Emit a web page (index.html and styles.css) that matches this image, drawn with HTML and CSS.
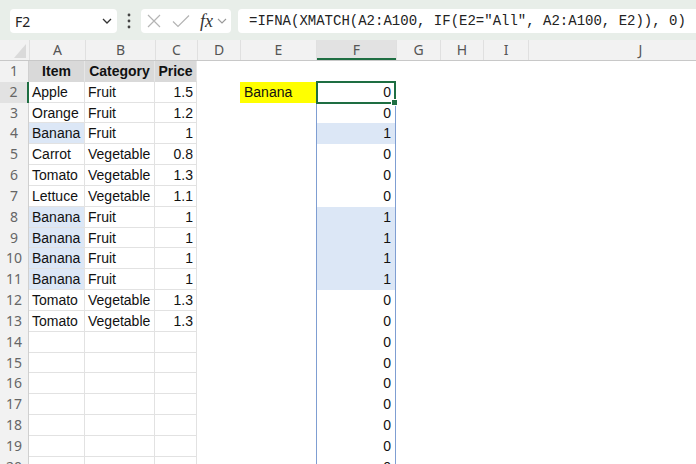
FILE: index.html
```html
<!DOCTYPE html>
<html>
<head>
<meta charset="utf-8">
<link rel="stylesheet" href="styles.css">
</head>
<body>
<div class="toolbar">
  <div class="namebox"><span>F2</span>
    <svg class="chev" width="10" height="6" viewBox="0 0 10 6"><path d="M1 1 L5 5 L9 1" fill="none" stroke="#333" stroke-width="1.3"/></svg>
  </div>
  <div class="grip">
    <svg width="4" height="16" viewBox="0 0 4 16"><circle cx="2" cy="2" r="1.4" fill="#444"/><circle cx="2" cy="8" r="1.4" fill="#444"/><circle cx="2" cy="14" r="1.4" fill="#444"/></svg>
  </div>
  <div class="fxbox">
    <svg class="ico-x" width="14" height="14" viewBox="0 0 14 14"><path d="M1 1 L13 13 M13 1 L1 13" stroke="#b4b4b4" stroke-width="1.2" fill="none"/></svg>
    <svg class="ico-ok" width="18" height="14" viewBox="0 0 18 14"><path d="M1 7.5 L6 12.5 L17 1.5" stroke="#b4b4b4" stroke-width="1.2" fill="none"/></svg>
    <span class="fx">fx</span>
    <svg class="ico-dd" width="10" height="6" viewBox="0 0 10 6"><path d="M1 1 L5 5 L9 1" fill="none" stroke="#999" stroke-width="1.1"/></svg>
  </div>
  <div class="formula">=IFNA(XMATCH(A2:A100, IF(E2="All", A2:A100, E2)), 0)</div>
</div>

<div class="sheet">
  <div class="hdr">
    <div class="corner"><svg width="29" height="21" viewBox="0 0 29 21"><path d="M26 4 L26 18 L14 18 Z" fill="#dadada"/></svg></div>
    <div class="ch">A</div><div class="ch">B</div><div class="ch">C</div><div class="ch">D</div><div class="ch">E</div><div class="ch sel">F</div><div class="ch">G</div><div class="ch">H</div><div class="ch">I</div><div class="ch">J</div>
  </div>

  <div class="row"><div class="rh">1</div><div class="c th">Item</div><div class="c th">Category</div><div class="c th">Price</div><div></div><div></div><div></div><div></div></div>
  <div class="row"><div class="rh rsel">2</div><div class="c">Apple</div><div class="c">Fruit</div><div class="c n">1.5</div><div></div><div class="yl">Banana</div><div class="f active">0</div><div></div></div>
  <div class="row"><div class="rh">3</div><div class="c">Orange</div><div class="c">Fruit</div><div class="c n">1.2</div><div></div><div></div><div class="f">0</div><div></div></div>
  <div class="row"><div class="rh">4</div><div class="c hl">Banana</div><div class="c">Fruit</div><div class="c n">1</div><div></div><div></div><div class="f hl">1</div><div></div></div>
  <div class="row"><div class="rh">5</div><div class="c">Carrot</div><div class="c">Vegetable</div><div class="c n">0.8</div><div></div><div></div><div class="f">0</div><div></div></div>
  <div class="row"><div class="rh">6</div><div class="c">Tomato</div><div class="c">Vegetable</div><div class="c n">1.3</div><div></div><div></div><div class="f">0</div><div></div></div>
  <div class="row"><div class="rh">7</div><div class="c">Lettuce</div><div class="c">Vegetable</div><div class="c n">1.1</div><div></div><div></div><div class="f">0</div><div></div></div>
  <div class="row"><div class="rh">8</div><div class="c hl">Banana</div><div class="c">Fruit</div><div class="c n">1</div><div></div><div></div><div class="f hl">1</div><div></div></div>
  <div class="row"><div class="rh">9</div><div class="c hl">Banana</div><div class="c">Fruit</div><div class="c n">1</div><div></div><div></div><div class="f hl">1</div><div></div></div>
  <div class="row"><div class="rh">10</div><div class="c hl">Banana</div><div class="c">Fruit</div><div class="c n">1</div><div></div><div></div><div class="f hl">1</div><div></div></div>
  <div class="row"><div class="rh">11</div><div class="c hl">Banana</div><div class="c">Fruit</div><div class="c n">1</div><div></div><div></div><div class="f hl">1</div><div></div></div>
  <div class="row"><div class="rh">12</div><div class="c">Tomato</div><div class="c">Vegetable</div><div class="c n">1.3</div><div></div><div></div><div class="f">0</div><div></div></div>
  <div class="row"><div class="rh">13</div><div class="c">Tomato</div><div class="c">Vegetable</div><div class="c n">1.3</div><div></div><div></div><div class="f">0</div><div></div></div>
  <div class="row"><div class="rh">14</div><div class="c"></div><div class="c"></div><div class="c"></div><div></div><div></div><div class="f">0</div><div></div></div>
  <div class="row"><div class="rh">15</div><div class="c"></div><div class="c"></div><div class="c"></div><div></div><div></div><div class="f">0</div><div></div></div>
  <div class="row"><div class="rh">16</div><div class="c"></div><div class="c"></div><div class="c"></div><div></div><div></div><div class="f">0</div><div></div></div>
  <div class="row"><div class="rh">17</div><div class="c"></div><div class="c"></div><div class="c"></div><div></div><div></div><div class="f">0</div><div></div></div>
  <div class="row"><div class="rh">18</div><div class="c"></div><div class="c"></div><div class="c"></div><div></div><div></div><div class="f">0</div><div></div></div>
  <div class="row"><div class="rh">19</div><div class="c"></div><div class="c"></div><div class="c"></div><div></div><div></div><div class="f">0</div><div></div></div>
  <div class="row"><div class="rh">20</div><div class="c"></div><div class="c"></div><div class="c"></div><div></div><div></div><div class="f">0</div><div></div></div>
</div>
</body>
</html>
```

FILE: styles.css
```css
html, body {
  margin: 0;
  padding: 0;
}
body {
  width: 696px;
  height: 464px;
  overflow: hidden;
  background: #ffffff;
  font-family: "Liberation Sans", Arial, sans-serif;
  color: #111;
}

/* ---------- formula bar ---------- */
.toolbar {
  height: 40px;
  box-sizing: border-box;
  background: #e8eee9;
  display: flex;
  align-items: flex-start;
  padding: 9px 0 0 10px;
}
.namebox {
  width: 107px;
  height: 24px;
  box-sizing: border-box;
  background: #fff;
  border-radius: 4px;
  display: flex;
  align-items: center;
  justify-content: space-between;
  padding: 0 5px 0 5px;
  font-family: "Noto Sans", "Liberation Sans", sans-serif;
  font-size: 14px;
  color: #222;
}
.grip {
  width: 24px;
  height: 24px;
  display: flex;
  align-items: center;
  justify-content: center;
}
.fxbox {
  width: 90px;
  height: 24px;
  box-sizing: border-box;
  background: #fff;
  border-radius: 4px;
  display: flex;
  align-items: center;
}
.ico-x { margin-left: 6px; }
.ico-ok { margin-left: 11px; }
.fx {
  margin-left: 10px;
  font-family: "Liberation Serif", "Times New Roman", serif;
  font-style: italic;
  font-size: 18px;
  line-height: 24px;
  color: #333;
}
.ico-dd { margin-left: 4px; }
.formula {
  margin-left: 7px;
  flex: 1;
  height: 24px;
  background: #fff;
  border-radius: 4px 0 0 4px;
  font-family: "Liberation Mono", "Courier New", monospace;
  font-size: 14px;
  line-height: 24px;
  padding-left: 11px;
  white-space: nowrap;
  overflow: hidden;
  color: #222;
}

/* ---------- sheet ---------- */
.sheet {
  overflow: hidden;
}
.hdr {
  display: grid;
  grid-template-columns: 29px 56px 70px 42px 43px 76px 80px 44px 43px 45px 224px;
  height: 21px;
  box-sizing: border-box;
  background: #f2f2f2;
  border-bottom: 1px solid #c8c8c8;
  width: 752px;
}
.corner {
  height: 20px;
  overflow: hidden;
}
.ch {
  font-family: "Noto Sans", "Liberation Sans", sans-serif;
  font-size: 14px;
  line-height: 20px;
  color: #555;
  text-align: center;
  border-left: 1px solid #e0e0e0;
}
.ch.sel {
  background: #e2e2e2;
  box-shadow: inset 0 -2px 0 #1e6e42;
}

.row {
  display: grid;
  grid-template-columns: 29px 56px 70px 42px 43px 76px 80px 1fr;
  height: 20.83px;
}
.rh {
  background: #f2f2f2;
  border-right: 1px solid #d0d0d0;
  font-family: "Noto Sans", "Liberation Sans", sans-serif;
  font-size: 14px;
  line-height: 20.83px;
  color: #666;
  text-align: center;
}
.rh.rsel {
  background: #e2e2e2;
  border-right: 2px solid #1e6e42;
}
.c {
  box-sizing: border-box;
  border-right: 1px solid #e2e2e2;
  border-bottom: 1px solid #e2e2e2;
  padding: 0 3px;
  font-size: 14px;
  line-height: 20px;
  white-space: nowrap;
  overflow: hidden;
}
.c.n {
  text-align: right;
}
.c.th {
  background: #d9d9d9;
  font-weight: bold;
  text-align: center;
  border-right: 1px solid #e6e6e6;
  border-bottom: 1px solid #d9d9d9;
}
.hl {
  background: #dce7f6;
}
.yl {
  background: #ffff00;
  font-size: 14px;
  line-height: 20.83px;
  padding-left: 4px;
}
.f {
  box-sizing: border-box;
  border-left: 1px solid #7f9ed2;
  border-right: 1px solid #7f9ed2;
  text-align: right;
  padding-right: 4px;
  font-size: 14px;
  line-height: 20.83px;
}
.f.active {
  position: relative;
}
.f.active::after {
  content: "";
  position: absolute;
  left: -1px;
  top: -1px;
  right: -1px;
  bottom: -1px;
  border: 2px solid #1e6e42;
}
.f.active::before {
  content: "";
  position: absolute;
  right: -3px;
  bottom: -3px;
  width: 5px;
  height: 5px;
  background: #1e6e42;
  border: 1px solid #fff;
  z-index: 2;
}
```
